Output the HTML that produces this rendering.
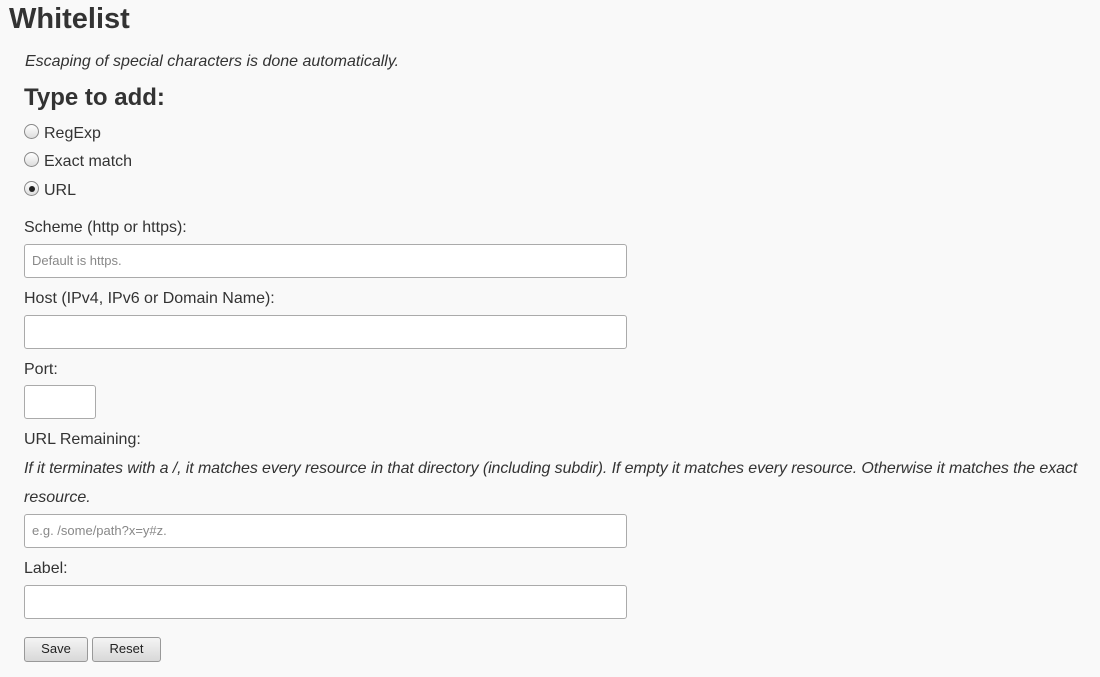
<!DOCTYPE html>
<html><head><style>
body{margin:0;width:1100px;height:677px;background:#f9f9f9;font-family:"Liberation Sans",sans-serif;color:#333;position:relative;overflow:hidden}
.a{position:absolute;white-space:nowrap;line-height:normal}
.t{font-size:16px}
.i{font-style:italic}
.in{position:absolute;left:24px;background:#fff;border:1px solid #aaa;border-radius:3px;box-sizing:border-box;width:603px;height:34px}
.ph{position:absolute;left:7px;top:8px;font-size:13px;color:#888}
.r{position:absolute;left:24px;width:15px;height:15px;border-radius:50%;border:1px solid #888;box-sizing:border-box;background:linear-gradient(#fff,#ddd)}
.btn{position:absolute;top:637px;height:25px;border:1px solid #999;border-radius:3px;box-sizing:border-box;background:linear-gradient(#f4f4f4,#d8d8d8);font-size:13px;text-align:center;line-height:22px;color:#222}
</style></head><body>
<div class="a" style="left:9px;top:3px;font-size:29px;font-weight:bold">Whitelist</div>
<div class="a t i" style="left:25px;top:53px">Escaping of special characters is done automatically.</div>
<div class="a" style="left:24px;top:84px;font-size:24px;font-weight:bold">Type to add:</div>
<div class="r" style="top:124px"></div>
<div class="a t" style="left:44px;top:125px">RegExp</div>
<div class="r" style="top:152px"></div>
<div class="a t" style="left:44px;top:153px">Exact match</div>
<div class="r" style="top:181px"><div style="position:absolute;left:3.5px;top:3.5px;width:6px;height:6px;border-radius:50%;background:#222"></div></div>
<div class="a t" style="left:44px;top:182px">URL</div>
<div class="a t" style="left:24px;top:219px">Scheme (http or https):</div>
<div class="in" style="top:244px"><span class="ph">Default is https.</span></div>
<div class="a t" style="left:24px;top:290px">Host (IPv4, IPv6 or Domain Name):</div>
<div class="in" style="top:315px"></div>
<div class="a t" style="left:24px;top:361px">Port:</div>
<div class="in" style="top:385px;width:72px"></div>
<div class="a t" style="left:24px;top:431px">URL Remaining:</div>
<div class="a t i" style="left:24px;top:460px;letter-spacing:-0.1px">If it terminates with a /, it matches every resource in that directory (including subdir). If empty it matches every resource. Otherwise it matches the exact</div>
<div class="a t i" style="left:24px;top:489px">resource.</div>
<div class="in" style="top:514px"><span class="ph">e.g. /some/path?x=y#z.</span></div>
<div class="a t" style="left:24px;top:560px">Label:</div>
<div class="in" style="top:585px"></div>
<div class="btn" style="left:24px;width:64px">Save</div>
<div class="btn" style="left:92px;width:69px">Reset</div>
</body></html>
